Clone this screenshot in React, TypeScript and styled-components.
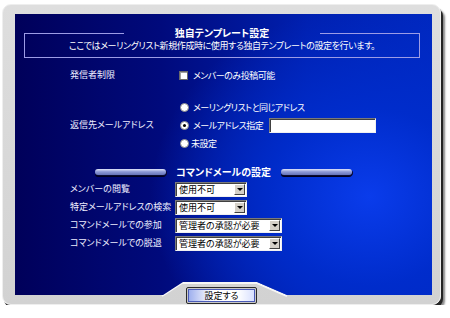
import React from 'react'
import styled, { createGlobalStyle } from 'styled-components'

const GlobalStyle = createGlobalStyle`
  html, body {
    margin: 0;
    padding: 0;
    background: #ffffff;
  }
  body {
    font-family: "Noto Sans CJK JP", "DejaVu Sans", sans-serif;
    font-feature-settings: "palt";
  }
`

const Frame = styled.div`
  display: grid;
  width: 437px;
  height: 299px;
  margin: 4px 0 0 2px;
  border: 1px solid #eeeeee;
  border-radius: 9px;
  background: linear-gradient(#dedede, #d2d2d2);
  box-shadow: 2px 3px 0 #262626, 4px 5px 2px #8a8a8a;
`

const Panel = styled.div`
  grid-area: 1 / 1;
  align-self: start;
  display: flex;
  flex-direction: column;
  box-sizing: border-box;
  width: 417px;
  height: 281px;
  margin: 9px 0 0 12px;
  padding-top: 13px;
  background:
    radial-gradient(ellipse 70% 90% at 85% 65%, rgba(10, 60, 235, 1) 0%, rgba(0, 45, 205, 0.9) 35%, rgba(0, 30, 160, 0) 75%),
    linear-gradient(to right, #00005a 0%, #000a7c 35%, #0020b0 70%, #0028c0 100%);
  clip-path: polygon(0 0, 100% 0, 100% 100%, 272px 100%, 242px 268px, 168px 268px, 148px 100%, 0 100%);
`

const NotchEdge = styled.svg`
  grid-area: 1 / 1;
  width: 437px;
  height: 299px;
  pointer-events: none;
`

const IntroBox = styled.fieldset`
  box-sizing: border-box;
  width: 396px;
  min-width: 0;
  margin: 0 0 0 9px;
  padding: 1px 0 5px;
  border: 1px solid #9c9ce6;
  text-align: center;
`

const Legend = styled.legend`
  margin: 0 auto;
  padding: 0 51px;
  color: #ffffff;
  font-size: 10px;
  font-weight: bold;
  line-height: 12px;
`

const IntroText = styled.p`
  margin: 0;
  color: #ffffff;
  font-size: 9px;
  line-height: 12px;
  letter-spacing: -0.4px;
`

const OptionGrid = styled.div`
  display: grid;
  grid-template-columns: 105px auto;
  row-gap: 15px;
  align-items: center;
  margin: 9px 0 0 55px;
  color: #eeeeff;
  font-size: 9px;
`

const SelectGrid = styled.div`
  display: grid;
  grid-template-columns: 105px auto;
  grid-auto-rows: 18px;
  align-items: center;
  margin-left: 55px;
  color: #eeeeff;
  font-size: 9px;
`

const Label = styled.span`
  line-height: 12px;
  white-space: nowrap;
`

const CheckRow = styled.div`
  display: flex;
  align-items: center;
  gap: 5px;
  height: 16px;
  padding-left: 4px;
  color: #ffffff;
`

const CheckBox = styled.span`
  box-sizing: border-box;
  width: 9px;
  height: 9px;
  background: #ffffff;
  border: 1px solid #6a6a6a;
  box-shadow: inset 1px 1px 0 #a0a0a0;
`

const RadioGroup = styled.div`
  display: flex;
  flex-direction: column;
`

const RadioRow = styled.div<{ $tight?: boolean }>`
  display: flex;
  align-items: center;
  gap: ${(p) => (p.$tight ? '2px' : '4px')};
  height: 18px;
  padding-left: 5px;
  color: #ffffff;
  white-space: nowrap;
`

const RadioText = styled.span`
  letter-spacing: -0.5px;
`

const Radio = styled.span<{ $checked?: boolean }>`
  display: flex;
  align-items: center;
  justify-content: center;
  box-sizing: border-box;
  width: 9px;
  height: 9px;
  border-radius: 50%;
  background: #ffffff;
  border: 1px solid #8a8a8a;

  &::after {
    content: '';
    display: ${(p) => (p.$checked ? 'block' : 'none')};
    width: 3px;
    height: 3px;
    border-radius: 50%;
    background: #000000;
  }
`

const TextBox = styled.span`
  box-sizing: border-box;
  width: 107px;
  height: 15px;
  margin-left: 2px;
  background: #ffffff;
  border: 1px solid;
  border-color: #7a7a7a #f0f0f0 #f0f0f0 #7a7a7a;
  box-shadow: inset 1px 1px 0 #404040;
`

const SectionHeading = styled.div`
  display: flex;
  align-items: center;
  justify-content: center;
  gap: 10px;
  height: 17px;
  margin-top: 11px;
  color: #ffffff;
  font-size: 10px;
  font-weight: bold;
`

const HeadingBar = styled.span`
  width: 71px;
  height: 6px;
  border-radius: 4px;
  background: linear-gradient(#dfe4fa, #8e9ad6 45%, #6472b8);
  box-shadow: 1px 1px 0 #0a0a30, 0 2px 0 #000020;
`

const SelectBox = styled.div<{ $width: number }>`
  display: flex;
  align-items: center;
  justify-content: space-between;
  box-sizing: border-box;
  width: ${(p) => p.$width}px;
  height: 15px;
  padding: 0 1px 0 3px;
  background: #ffffff;
  border: 1px solid;
  border-color: #7a7a7a #f0f0f0 #f0f0f0 #7a7a7a;
  box-shadow: inset 1px 1px 0 #404040;
  color: #000000;
  font-size: 9px;
  white-space: nowrap;
`

const ArrowButton = styled.span`
  display: flex;
  align-items: center;
  justify-content: center;
  box-sizing: border-box;
  width: 11px;
  height: 11px;
  background: #d4d0c8;
  border: 1px solid;
  border-color: #ffffff #404040 #404040 #ffffff;

  &::after {
    content: '';
    border-left: 3px solid transparent;
    border-right: 3px solid transparent;
    border-top: 3px solid #000000;
  }
`

const Footer = styled.div`
  grid-area: 1 / 1;
  align-self: end;
  justify-self: center;
`

const SubmitButton = styled.button`
  display: block;
  box-sizing: border-box;
  width: 71px;
  height: 17px;
  padding: 1px;
  border: 1px solid #2a2a2a;
  border-radius: 2px;
  background: #c8c8c8;
  font-family: "Noto Sans CJK JP", sans-serif;
  font-feature-settings: "palt";
  font-size: 9px;
  color: #000000;
`

const ButtonFace = styled.span`
  display: block;
  height: 100%;
  box-sizing: border-box;
  border: 1px solid #4a5ab8;
  background: linear-gradient(to right, #9fb0ee, #ffffff 35%, #ffffff 75%, #d8e0ff);
  line-height: 11px;
`

const Select = ({ value, width }: { value: string; width: number }) => (
  <SelectBox $width={width}>
    <span>{value}</span>
    <ArrowButton />
  </SelectBox>
)

const commandRows = [
  { label: 'メンバーの閲覧', value: '使用不可', width: 72 },
  { label: '特定メールアドレスの検索', value: '使用不可', width: 72 },
  { label: 'コマンドメールでの参加', value: '管理者の承認が必要', width: 107 },
  { label: 'コマンドメールでの脱退', value: '管理者の承認が必要', width: 107 },
]

export default function App() {
  return (
    <>
      <GlobalStyle />
      <Frame>
        <Panel>
          <IntroBox>
            <Legend>独自テンプレート設定</Legend>
            <IntroText>ここではメーリングリスト新規作成時に使用する独自テンプレートの設定を行います。</IntroText>
          </IntroBox>

          <OptionGrid>
            <Label>発信者制限</Label>
            <CheckRow>
              <CheckBox />
              <RadioText>メンバーのみ投稿可能</RadioText>
            </CheckRow>

            <Label>返信先メールアドレス</Label>
            <RadioGroup>
              <RadioRow>
                <Radio />
                <RadioText>メーリングリストと同じアドレス</RadioText>
              </RadioRow>
              <RadioRow>
                <Radio $checked />
                <RadioText>メールアドレス指定</RadioText>
                <TextBox />
              </RadioRow>
              <RadioRow $tight>
                <Radio />
                <RadioText>未設定</RadioText>
              </RadioRow>
            </RadioGroup>
          </OptionGrid>

          <SectionHeading>
            <HeadingBar />
            <span>コマンドメールの設定</span>
            <HeadingBar />
          </SectionHeading>

          <SelectGrid>
            {commandRows.map((row) => (
              <React.Fragment key={row.label}>
                <Label>{row.label}</Label>
                <Select value={row.value} width={row.width} />
              </React.Fragment>
            ))}
          </SelectGrid>
        </Panel>

        <NotchEdge viewBox="0 0 437 299">
          <polyline
            points="159,291 179,278 254,278 284,291"
            fill="none"
            stroke="#f6f6f6"
            strokeWidth="2"
          />
        </NotchEdge>

        <Footer>
          <SubmitButton type="button">
            <ButtonFace>設定する</ButtonFace>
          </SubmitButton>
        </Footer>
      </Frame>
    </>
  )
}
